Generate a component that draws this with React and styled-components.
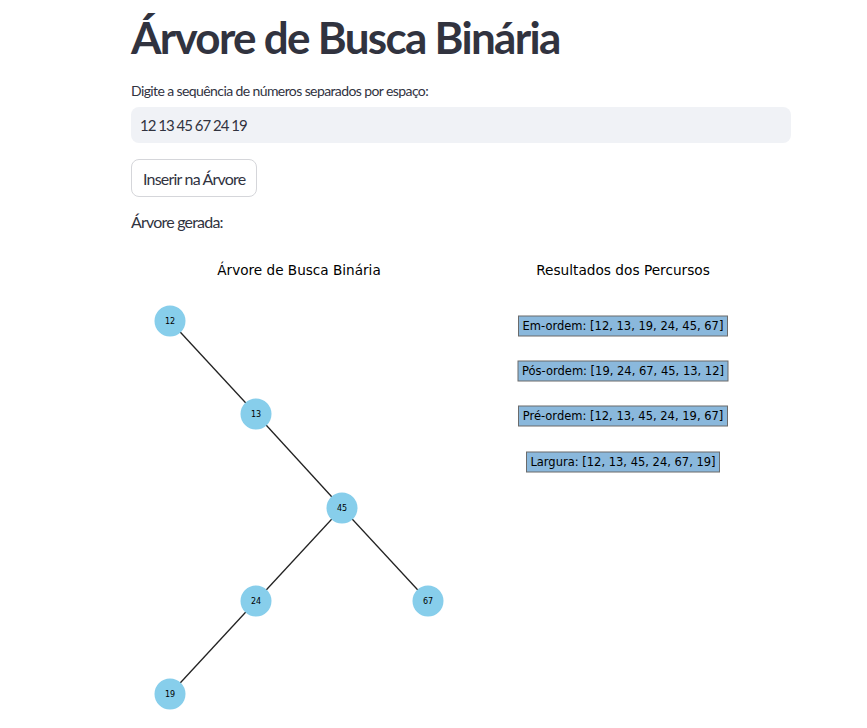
import styled, { createGlobalStyle } from "styled-components";

const GlobalStyle = createGlobalStyle`
  body {
    margin: 0;
    background: #ffffff;
    font-family: Lato, "Noto Sans", sans-serif;
    color: #31333f;
  }
`;

const Main = styled.main`
  width: 660px;
  margin-left: 131px;
  display: flex;
  flex-direction: column;
`;

const Title = styled.h1`
  margin: 11px 0 0;
  font-size: 44px;
  line-height: 53px;
  font-weight: 700;
  letter-spacing: -1.7px;
  color: #31333f;
`;

const Label = styled.label`
  margin-top: 18px;
  font-size: 14px;
  line-height: 18px;
  letter-spacing: -0.6px;
`;

const Input = styled.input`
  margin-top: 7px;
  height: 36px;
  border: none;
  border-radius: 8px;
  background: #f0f2f6;
  padding: 0 9px;
  font-family: inherit;
  font-size: 15px;
  letter-spacing: -1px;
  color: #31333f;
  outline: none;
`;

const Button = styled.button`
  align-self: flex-start;
  margin-top: 16px;
  height: 38px;
  padding: 0 11px;
  border: 1px solid #d5d6da;
  border-radius: 8px;
  background: #ffffff;
  font-family: inherit;
  font-size: 16px;
  letter-spacing: -0.8px;
  color: #31333f;
`;

const Caption = styled.p`
  margin: 13px 0 0;
  font-size: 16px;
  line-height: 24px;
  letter-spacing: -0.8px;
`;

const Figure = styled.svg`
  display: block;
  margin-top: 7px;
  font-family: "DejaVu Sans", sans-serif;
`;

const nodes = [
  { v: 12, x: 39, y: 80 },
  { v: 13, x: 125, y: 173 },
  { v: 45, x: 211, y: 267 },
  { v: 24, x: 125, y: 360 },
  { v: 67, x: 297, y: 360 },
  { v: 19, x: 39, y: 453 },
];

const edges = [
  [0, 1],
  [1, 2],
  [2, 3],
  [2, 4],
  [3, 5],
];

const results = [
  { text: "Em-ordem: [12, 13, 19, 24, 45, 67]", y: 85, w: 209 },
  { text: "Pós-ordem: [19, 24, 67, 45, 13, 12]", y: 130, w: 210 },
  { text: "Pré-ordem: [12, 13, 45, 24, 19, 67]", y: 175, w: 209 },
  { text: "Largura: [12, 13, 45, 24, 67, 19]", y: 221, w: 193 },
];

function TreeFigure() {
  return (
    <Figure width="660" height="490" viewBox="0 0 660 490">
      <text x="168" y="34" textAnchor="middle" fontSize="13.6" fill="#000">
        Árvore de Busca Binária
      </text>
      {edges.map(([a, b]) => (
        <line
          key={`${a}-${b}`}
          x1={nodes[a].x}
          y1={nodes[a].y}
          x2={nodes[b].x}
          y2={nodes[b].y}
          stroke="#222"
          strokeWidth="1.3"
        />
      ))}
      {nodes.map((n) => (
        <g key={n.v}>
          <circle cx={n.x} cy={n.y} r="15.5" fill="#87ceeb" />
          <text x={n.x} y={n.y + 3} textAnchor="middle" fontSize="8" fill="#000">
            {n.v}
          </text>
        </g>
      ))}

      <text x="492" y="34" textAnchor="middle" fontSize="13.7" fill="#000">
        Resultados dos Percursos
      </text>
      {results.map((r) => (
        <g key={r.text}>
          <rect
            x={492 - r.w / 2}
            y={r.y - 10}
            width={r.w}
            height="20"
            fill="#8ab8dc"
            stroke="#6b6b6b"
            strokeWidth="1"
          />
          <text x="492" y={r.y + 4} textAnchor="middle" fontSize="11.5" fill="#000">
            {r.text}
          </text>
        </g>
      ))}
    </Figure>
  );
}

export default function App() {
  return (
    <>
      <GlobalStyle />
      <Main>
        <Title>Árvore de Busca Binária</Title>
        <Label>Digite a sequência de números separados por espaço:</Label>
        <Input defaultValue="12 13 45 67 24 19" />
        <Button>Inserir na Árvore</Button>
        <Caption>Árvore gerada:</Caption>
        <TreeFigure />
      </Main>
    </>
  );
}
